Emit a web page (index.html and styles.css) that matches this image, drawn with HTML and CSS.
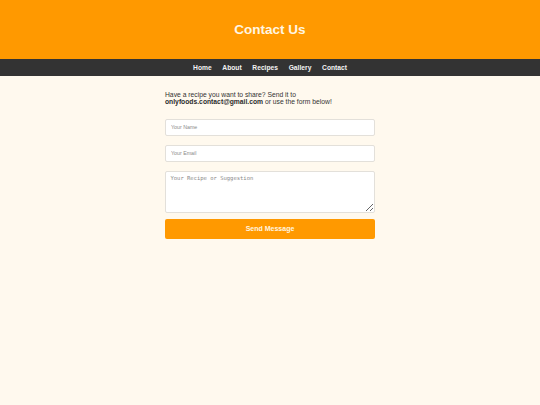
FILE: index.html
```html
<!DOCTYPE html>
<html lang="en">
<head>
<meta charset="utf-8">
<title>Contact Us</title>
<link rel="stylesheet" href="styles.css">
</head>
<body>
<header class="site-header">
  <h1 class="site-title">Contact Us</h1>
</header>
<nav class="site-nav">
  <a href="#">Home</a>
  <a href="#">About</a>
  <a href="#">Recipes</a>
  <a href="#">Gallery</a>
  <a href="#">Contact</a>
</nav>
<main class="content">
  <p class="intro">Have a recipe you want to share? Send it to <strong>onlyfoods.contact@gmail.com</strong> or use the form below!</p>
  <form class="contact-form">
    <input class="field" type="text" placeholder="Your Name">
    <input class="field" type="email" placeholder="Your Email">
    <textarea class="field-area" placeholder="Your Recipe or Suggestion"></textarea>
    <button class="send-btn" type="button">Send Message</button>
  </form>
</main>
</body>
</html>
```
FILE: styles.css
```css
* { box-sizing: border-box; }
html, body {
  margin: 0;
  padding: 0;
  background: #fff9ee;
  font-family: "Liberation Sans", Arial, sans-serif;
  color: #333;
}
.site-header {
  height: 59px;
  background: #ff9900;
  display: flex;
  align-items: center;
  justify-content: center;
}
.site-title {
  margin: 0;
  font-size: 13.5px;
  font-weight: bold;
  color: #fff6e2;
  line-height: 1;
}
.site-nav {
  height: 17px;
  background: #333333;
  display: flex;
  align-items: center;
  justify-content: center;
  gap: 10.7px;
}
.site-nav a {
  color: #f4f4f4;
  text-decoration: none;
  font-size: 6.7px;
  font-weight: bold;
}
.content {
  width: 210px;
  margin: 0 auto;
  padding-top: 14.5px;
}
.intro {
  margin: 0;
  font-size: 6.75px;
  line-height: 7.5px;
  color: #333;
}
.intro strong { color: #2a2a2a; }
.contact-form {
  margin-top: 13px;
  display: flex;
  flex-direction: column;
}
.field {
  height: 17px;
  margin: 0 0 9px 0;
  padding: 0 5px;
  border: 1px solid #e3e0da;
  border-radius: 2px;
  background: #ffffff;
  font-family: "Liberation Sans", Arial, sans-serif;
  font-size: 5.3px;
  color: #333;
  outline: none;
}
.field::placeholder { color: #8a8a8a; }
.field-area {
  display: block;
  height: 42px;
  margin: 0 0 6px 0;
  padding: 3px 4.5px;
  border: 1px solid #e3e0da;
  border-radius: 2px;
  background: #ffffff;
  font-family: "DejaVu Sans Mono", monospace;
  font-size: 5.5px;
  color: #333;
  outline: none;
}
.field-area::placeholder { color: #8a8a8a; }
.send-btn {
  height: 20px;
  border: none;
  border-radius: 2px;
  background: #ff9900;
  color: #fff6e2;
  font-family: "Liberation Sans", Arial, sans-serif;
  font-size: 7px;
  font-weight: bold;
  padding: 0;
}
```
